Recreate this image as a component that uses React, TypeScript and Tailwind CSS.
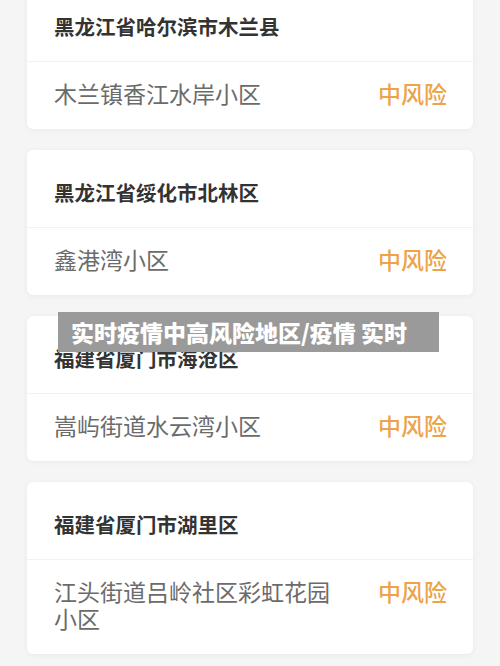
import React from "react";

type Item = { region: string; place: string };

const items: Item[] = [
  { region: "黑龙江省哈尔滨市木兰县", place: "木兰镇香江水岸小区" },
  { region: "黑龙江省绥化市北林区", place: "鑫港湾小区" },
  { region: "福建省厦门市海沧区", place: "嵩屿街道水云湾小区" },
  { region: "福建省厦门市湖里区", place: "江头街道吕岭社区彩虹花园小区" },
];

const font = { fontFamily: '"Noto Sans CJK SC", "Noto Sans", sans-serif' };

export default function App() {
  return (
    <div
      className="relative w-[500px] h-[666px] overflow-hidden bg-[#f5f5f5]"
      style={font}
    >
      <div className="flex flex-col gap-[21px] px-[27px] mt-[-16px]">
        {items.map((it) => (
          <div
            key={it.region}
            className="bg-white rounded-[6px] shadow-[0_1px_6px_rgba(0,0,0,0.05)]"
          >
            <div className="h-[77px] flex items-center pt-[6px] px-[27px]">
              <span className="text-[20.5px] leading-[28px] font-bold text-[#333333]">
                {it.region}
              </span>
            </div>
            <div className="border-t border-[#f2f2f2] flex items-start justify-between pt-[18px] pb-[22px] pl-[27px] pr-[26px]">
              <span className="w-[285px] text-[23px] leading-[27px] text-[#6b6b6b]">
                {it.place}
              </span>
              <span className="text-[23px] leading-[27px] font-medium text-[#eca34a]">
                中风险
              </span>
            </div>
          </div>
        ))}
      </div>
      <div className="absolute left-[58px] top-[312px] w-[381px] h-[40px] bg-[#9a9a9a] flex items-center pl-[13px]">
        <span className="text-white text-[23px] leading-[28px] font-black whitespace-nowrap">
          实时疫情中高风险地区/疫情 实时
        </span>
      </div>
    </div>
  );
}
